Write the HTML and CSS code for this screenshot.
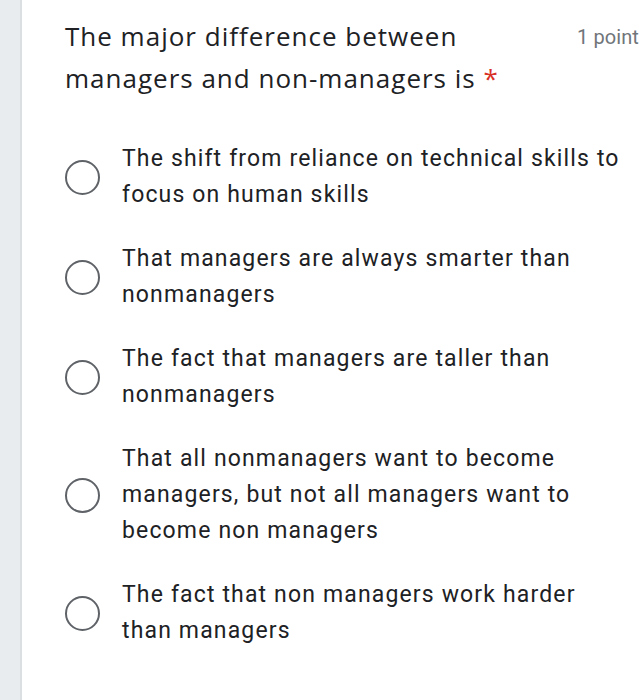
FILE: index.html
```html
<!DOCTYPE html>
<html>
<head>
<meta charset="utf-8">
<link rel="stylesheet" href="styles.css">
</head>
<body>
<div class="page">
  <div class="strip"></div>
  <main class="card">
    <div class="header">
      <div class="title">The major difference between managers and non-managers is <span class="req">*</span></div>
      <div class="points">1 point</div>
    </div>
    <div class="options">
      <div class="option"><span class="radio"></span><span class="label">The shift from reliance on technical skills to focus on human skills</span></div>
      <div class="option"><span class="radio"></span><span class="label">That managers are always smarter than nonmanagers</span></div>
      <div class="option"><span class="radio"></span><span class="label">The fact that managers are taller than nonmanagers</span></div>
      <div class="option"><span class="radio"></span><span class="label">That all nonmanagers want to become managers, but not all managers want to become non managers</span></div>
      <div class="option"><span class="radio"></span><span class="label">The fact that non managers work harder than managers</span></div>
    </div>
  </main>
</div>
</body>
</html>
```

FILE: styles.css
```css
html, body {
  margin: 0;
  padding: 0;
  background: #ffffff;
  overflow: hidden;
}
.page {
  display: flex;
  width: 639px;
  height: 700px;
  overflow: hidden;
}
.strip {
  width: 20px;
  flex: none;
  background: #e8ecef;
  border-right: 2px solid #dcdfe2;
}
.card {
  flex: 1;
  padding: 15px 0 0 43px;
  color: #202124;
  font-family: Roboto, "Liberation Sans", sans-serif;
  min-width: 0;
}
.header {
  display: flex;
  align-items: flex-start;
}
.title {
  font-family: "Open Sans", Roboto, sans-serif;
  font-size: 26px;
  line-height: 42px;
  width: 480px;
  flex: none;
  letter-spacing: 1px;
}
.req {
  color: #d93025;
}
.points {
  margin-left: 32px;
  white-space: nowrap;
  font-size: 20px;
  line-height: 44px;
  letter-spacing: 0.1px;
  color: #70757a;
}
.options {
  margin-top: 42px;
  display: flex;
  flex-direction: column;
  gap: 28px;
}
.option {
  display: flex;
  align-items: center;
  gap: 22px;
}
.radio {
  flex: none;
  width: 31px;
  height: 31px;
  border: 2.6px solid #5f6368;
  border-radius: 50%;
}
.label {
  width: 505px;
  font-size: 23px;
  line-height: 36px;
  letter-spacing: 1.15px;
}
```
